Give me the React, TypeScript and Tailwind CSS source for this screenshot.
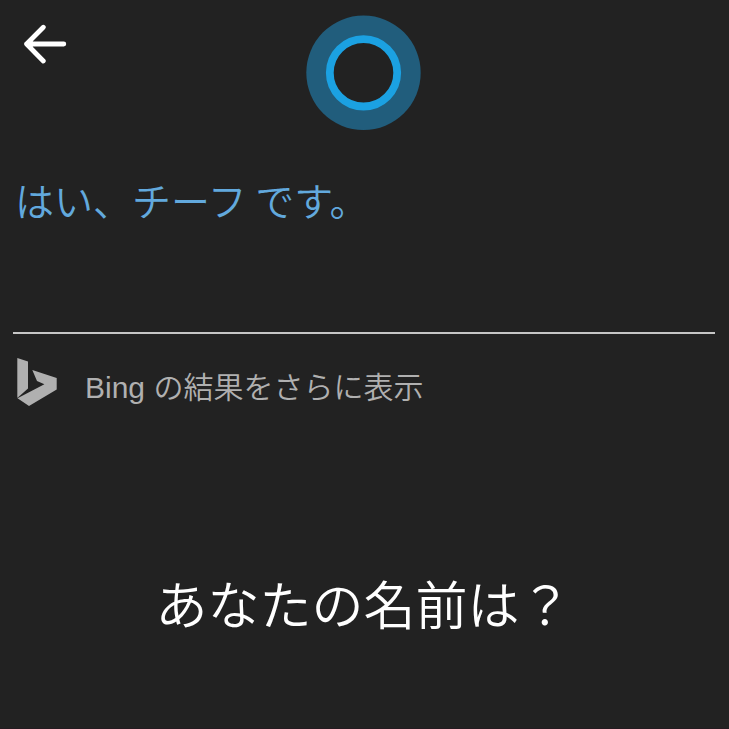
const BackIcon = () => (
  <svg
    className="h-10 w-11"
    viewBox="0 0 44 40"
    fill="none"
    stroke="white"
    strokeWidth="4.8"
    strokeLinecap="round"
    strokeLinejoin="round"
  >
    <path d="M19.3 3.2L2.6 20L19.3 37M2.6 20H39.8" />
    <path d="M3.5 20L8 15.5V24.5Z" fill="white" strokeWidth="1" />
  </svg>
);

const CortanaOrb = () => (
  <svg className="h-29 w-29" viewBox="0 0 116 116">
    <circle cx="57.5" cy="57.8" r="57.2" fill="#215d7c" />
    <circle cx="57.5" cy="57.8" r="33.7" fill="#222222" stroke="#1ba1e2" strokeWidth="7.8" />
  </svg>
);

const BingLogo = () => (
  <svg className="h-12 w-10 shrink-0" viewBox="0 0 40 48" fill="#b0b0b0">
    <path d="M0.3 0L11 3.4V30.4L0.9 39.6L0.3 39.8Z" />
    <path d="M15.3 12L39.7 20V31.4L12 48L0.5 40.3L27.4 26.3L20 23Z" />
  </svg>
);

export default function App() {
  return (
    <main className="flex min-h-screen flex-col border-b border-[#251b21] bg-[#222222] pr-[14px] pb-[85px] pl-3 font-['Liberation_Sans','Noto_Sans_CJK_JP',sans-serif] font-[350]">
      {/* Top bar */}
      <header className="grid grid-cols-[1fr_auto_1fr] items-start pt-[15px]">
        <button type="button" aria-label="戻る" className="mt-[9px] ml-3 justify-self-start">
          <BackIcon />
        </button>
        <CortanaOrb />
      </header>

      {/* Reply */}
      <p className="mt-10 px-[3px] font-['Noto_Sans_CJK_JP',sans-serif] text-[39px] leading-[56px] text-[#62a9dd]">
        はい、チーフ です。
      </p>

      {/* Bing results */}
      <section className="ml-px mt-[105px] border-t-2 border-[#c6c6c6] pt-6">
        <a href="#" className="flex items-start gap-7 px-1 text-[30px] text-[#b0b0b0]">
          <BingLogo />
          <span className="pt-1.5 leading-12">Bing の結果をさらに表示</span>
        </a>
      </section>

      {/* Prompt */}
      <h1 className="mt-auto pt-10 text-center font-[350] text-[52px] leading-[72px] text-white">
        あなたの名前は？
      </h1>
    </main>
  );
}
